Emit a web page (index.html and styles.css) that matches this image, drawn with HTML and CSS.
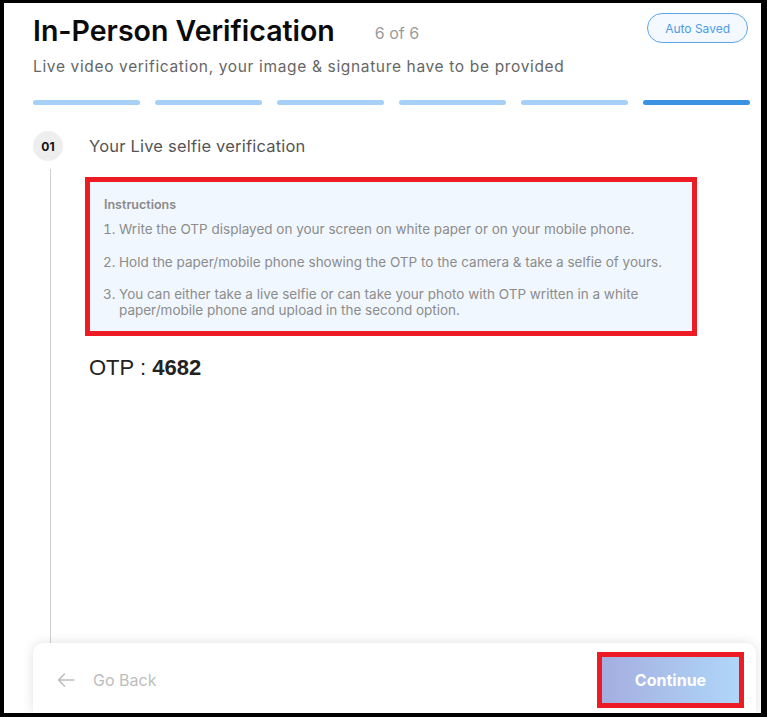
FILE: index.html
```html
<!DOCTYPE html>
<html lang="en">
<head>
  <meta charset="UTF-8">
  <title>In-Person Verification</title>
  <link rel="stylesheet" href="styles.css">
</head>
<body>
  <div class="marco">
    <header class="cabecera">
      <div class="fila-titulo">
        <h1>In-Person Verification</h1>
        <span class="contador">6 of 6</span>
        <span class="guardado">Auto Saved</span>
      </div>
      <p class="subtitulo">Live video verification, your image &amp; signature have to be provided</p>
      <div class="progreso">
        <span></span><span></span><span></span><span></span><span></span><span class="activo"></span>
      </div>
    </header>

    <section class="paso">
      <div class="paso-cabeza">
        <span class="numero">01</span>
        <span class="paso-titulo">Your Live selfie verification</span>
      </div>
      <div class="paso-cuerpo">
        <div class="instrucciones">
          <h3>Instructions</h3>
          <ol>
            <li>Write the OTP displayed on your screen on white paper or on your mobile phone.</li>
            <li>Hold the paper/mobile phone showing the OTP to the camera &amp; take a selfie of yours.</li>
            <li>You can either take a live selfie or can take your photo with OTP written in a white paper/mobile phone and upload in the second option.</li>
          </ol>
        </div>
        <p class="otp">OTP : <b>4682</b></p>
      </div>
    </section>

    <footer class="acciones">
      <button class="volver">
        <svg width="18" height="14" viewBox="0 0 18 14" fill="none" stroke="#bdbdbd" stroke-width="1.6" stroke-linecap="round" stroke-linejoin="round">
          <path d="M17 7H1.5M7.5 1L1.5 7l6 6"/>
        </svg>
        <span>Go Back</span>
      </button>
      <button class="continuar">Continue</button>
    </footer>
  </div>
</body>
</html>
```

FILE: styles.css
```css
body {
  margin: 0;
  background: #000;
  font-family: 'Inter', 'Open Sans', sans-serif;
}

.marco {
  margin: 3px 6px 0 4px;
  height: 710px;
  background: #fff;
  display: flex;
  flex-direction: column;
  overflow: hidden;
}

.cabecera {
  padding: 8px 11px 0 29px;
}

.fila-titulo {
  display: flex;
  align-items: center;
  height: 38px;
}

h1 {
  margin: 0;
  font-size: 28.5px;
  font-weight: 600;
  color: #0a0a0a;
}

.contador {
  margin-left: 40px;
  margin-top: 6px;
  font-size: 16px;
  color: #9a9a9a;
}

.guardado {
  margin-left: auto;
  margin-right: 2px;
  margin-top: -5px;
  padding: 7px 17px 6px;
  border: 1px solid #5aa5ea;
  border-radius: 15px;
  background: #f3f9ff;
  color: #4d9be6;
  font-size: 12px;
}

.subtitulo {
  margin: 8px 0 0;
  font-size: 15.5px;
  letter-spacing: 0.65px;
  color: #666;
}

.progreso {
  display: flex;
  gap: 15px;
  margin-top: 24px;
}

.progreso span {
  flex: 1;
  height: 5px;
  border-radius: 3px;
  background: #a5d1f8;
}

.progreso span.activo {
  background: #3a93e2;
}

.paso {
  flex: 1;
  display: flex;
  flex-direction: column;
  padding: 26px 11px 0 29px;
}

.paso-cabeza {
  display: flex;
  align-items: center;
  gap: 26px;
}

.numero {
  width: 30px;
  height: 30px;
  border-radius: 50%;
  background: #eee;
  display: flex;
  align-items: center;
  justify-content: center;
  font-size: 12px;
  font-weight: 700;
  color: #111;
}

.paso-titulo {
  font-size: 16.5px;
  letter-spacing: 0.2px;
  color: #555;
}

.paso-cuerpo {
  flex: 1;
  margin: 8px 0 0 17px;
  padding: 8px 0 0 34px;
  border-left: 1px solid #cfcfcf;
}

.instrucciones {
  width: 574px;
  padding: 15px 14px 13px;
  border: 5px solid #ed1c24;
  background: #f1f7fe;
  color: #8c8c8c;
  font-size: 13.5px;
}

.instrucciones h3 {
  margin: 0 0 9px;
  font-size: 12.5px;
  font-weight: 600;
  color: #8a8a8a;
}

.instrucciones ol {
  margin: 0;
  padding-left: 15px;
}

.instrucciones li {
  line-height: 16px;
  margin-bottom: 16.5px;
}

.instrucciones li:last-child {
  margin-bottom: 0;
}

.otp {
  margin: 19px 0 0 4px;
  font-family: 'Liberation Sans', sans-serif;
  font-size: 22px;
  color: #222;
}

.acciones {
  height: 70px;
  margin: 0 5px 0 29px;
  padding: 9px 12px 0 24px;
  box-sizing: border-box;
  background: #fff;
  border-radius: 10px 10px 0 0;
  box-shadow: 0 0 12px rgba(0, 0, 0, 0.12);
  display: flex;
  align-items: flex-start;
  justify-content: space-between;
}

.acciones button {
  font-family: inherit;
  cursor: pointer;
}

.volver {
  display: flex;
  align-items: center;
  gap: 18px;
  height: 56px;
  padding: 0;
  border: none;
  background: none;
  color: #bdbdbd;
  font-size: 16px;
}

.continuar {
  width: 147px;
  height: 56px;
  border: 5px solid #ed1c24;
  background: linear-gradient(90deg, #a5aee0, #afd6f8);
  color: #fff;
  font-size: 16px;
  font-weight: 700;
}
```
